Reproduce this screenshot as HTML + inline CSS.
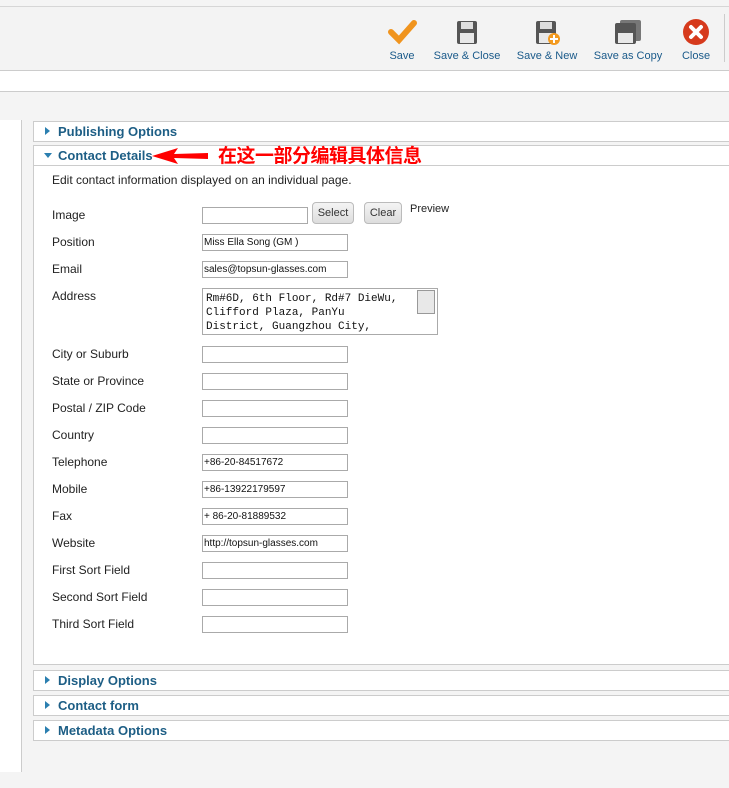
<!DOCTYPE html>
<html><head><meta charset="utf-8"><style>
body{margin:0;width:729px;height:788px;background:#f4f4f4;font-family:"Liberation Sans",Arial,sans-serif;position:relative;overflow:hidden;font-size:12px}
.abs{position:absolute}
.tb{left:0;top:6px;width:729px;height:63px;background:#f3f3f3;border-top:1px solid #d6d6d6;border-bottom:1px solid #ccc}
.btn{top:18px;text-align:center;color:#1a5a8a;font-size:11px}
.btn svg{display:block;margin:0 auto 4px}
.white2{left:0;top:71px;width:729px;height:20px;background:#fff;border-bottom:1px solid #ccc}
.leftcol{left:0;top:120px;width:21px;height:652px;background:#fff;border-right:1px solid #ccc}
.hdr{left:33px;width:700px;height:19px;background:#fff;border:1px solid #ccc;font-weight:bold;color:#1d5e85;font-size:13px}
.hdr span{position:absolute;left:24px;top:2px}
.tri{position:absolute;left:11px;top:5px;width:0;height:0;border-left:5px solid #2b7fb0;border-top:4px solid transparent;border-bottom:4px solid transparent}
.trid{position:absolute;left:10px;top:7px;border-top:5px solid #2b7fb0;border-left:4px solid transparent;border-right:4px solid transparent}
.body{left:33px;top:166px;width:700px;height:498px;background:#fff;border:1px solid #ccc;border-top:none}
.lbl{left:52px;color:#222;font-size:12px}
.in{left:202px;width:143px;height:15px;border:1px solid #aaa;background:#fff;font-size:10px;line-height:15px;padding-left:1px;color:#111}
.b2{height:20px;border:1px solid #bbb;border-radius:4px;background:linear-gradient(#f4f4f4,#ddd);font-size:11px;color:#333;text-align:center;line-height:20px}
</style></head><body>
<div class="abs tb"></div>
<div class="abs" style="left:724px;top:14px;width:1px;height:48px;background:#ccc"></div>
<div class="abs btn" style="left:386px;width:32px"><svg width="30" height="28" viewBox="0 0 30 28"><path d="M4 14 L12 22 L27 5" stroke="#f0941e" stroke-width="6" fill="none" stroke-linecap="round"/></svg>Save</div>
<div class="abs btn" style="left:432px;width:70px"><svg width="24" height="28" viewBox="0 0 24 28"><rect x="2" y="3" width="20" height="23" rx="2" fill="#555"/><rect x="6" y="4" width="12" height="7" fill="#ddd"/><rect x="5" y="15" width="14" height="10" fill="#e8e8e8"/></svg>Save &amp; Close</div>
<div class="abs btn" style="left:514px;width:66px"><svg width="26" height="28" viewBox="0 0 26 28"><rect x="2" y="3" width="20" height="23" rx="2" fill="#555"/><rect x="6" y="4" width="12" height="7" fill="#ddd"/><rect x="5" y="15" width="14" height="10" fill="#e8e8e8"/><circle cx="20" cy="21" r="6" fill="#f39a1f"/><path d="M20 17v8M16 21h8" stroke="#fff" stroke-width="2"/></svg>Save &amp; New</div>
<div class="abs btn" style="left:592px;width:72px"><svg width="30" height="28" viewBox="0 0 30 28"><rect x="7" y="2" width="21" height="21" rx="2" fill="#777"/><rect x="2" y="5" width="21" height="21" rx="2" fill="#555"/><rect x="5" y="15" width="15" height="10" fill="#e8e8e8"/></svg>Save as Copy</div>
<div class="abs btn" style="left:680px;width:32px"><svg width="30" height="28" viewBox="0 0 30 28"><circle cx="15" cy="14" r="13" fill="#d63a1c"/><path d="M10 9l10 10M20 9l-10 10" stroke="#fff" stroke-width="4" stroke-linecap="round"/></svg>Close</div>
<div class="abs white2"></div>
<div class="abs leftcol"></div>
<div class="abs hdr" style="top:121px"><div class="tri"></div><span>Publishing Options</span></div>
<div class="abs hdr" style="top:145px"><div class="trid"></div><span>Contact Details</span></div>
<svg class="abs" style="left:150px;top:146px" width="60" height="20"><path d="M2 10 L28 2 L24 8 L58 7 L58 13 L24 12 L28 18 Z" fill="#f00"/></svg>
<div class="abs" style="left:218px;top:144px;color:#f00;font-weight:bold;font-size:19px;font-family:'Noto Sans CJK SC',sans-serif;line-height:22px;letter-spacing:-0.5px">在这一部分编辑具体信息</div>
<div class="abs body"></div>
<div class="abs" style="left:52px;top:173px;color:#222">Edit contact information displayed on an individual page.</div>
<div class="abs lbl" style="top:208px">Image</div>
<div class="abs in" style="top:207px;width:103px"></div>
<div class="abs b2" style="left:312px;top:202px;width:40px">Select</div>
<div class="abs b2" style="left:364px;top:202px;width:36px">Clear</div>
<div class="abs" style="left:410px;top:203px;font-size:11px;color:#222">Preview</div>
<div class="abs lbl" style="top:235px">Position</div><div class="abs in" style="top:234px">Miss Ella Song (GM )</div>
<div class="abs lbl" style="top:262px">Email</div><div class="abs in" style="top:261px">sales@topsun-glasses.com</div>
<div class="abs lbl" style="top:289px">Address</div>
<div class="abs" style="left:202px;top:288px;width:236px;height:47px;border:1px solid #aaa;background:#fff;font-family:'Liberation Mono',monospace;font-size:11px;line-height:14px;padding:3px 0 0 3px;overflow:hidden;color:#111;box-sizing:border-box">Rm#6D, 6th Floor, Rd#7 DieWu,<br>Clifford Plaza, PanYu<br>District, Guangzhou City,</div>
<div class="abs" style="left:417px;top:290px;width:18px;height:24px;background:#e8e8e8;border:1px solid #999;box-sizing:border-box"></div>
<div class="abs lbl" style="top:347px">City or Suburb</div><div class="abs in" style="top:346px"></div>
<div class="abs lbl" style="top:374px">State or Province</div><div class="abs in" style="top:373px"></div>
<div class="abs lbl" style="top:401px">Postal / ZIP Code</div><div class="abs in" style="top:400px"></div>
<div class="abs lbl" style="top:428px">Country</div><div class="abs in" style="top:427px"></div>
<div class="abs lbl" style="top:455px">Telephone</div><div class="abs in" style="top:454px">+86-20-84517672</div>
<div class="abs lbl" style="top:482px">Mobile</div><div class="abs in" style="top:481px">+86-13922179597</div>
<div class="abs lbl" style="top:509px">Fax</div><div class="abs in" style="top:508px">+ 86-20-81889532</div>
<div class="abs lbl" style="top:536px">Website</div><div class="abs in" style="top:535px">http://topsun-glasses.com</div>
<div class="abs lbl" style="top:563px">First Sort Field</div><div class="abs in" style="top:562px"></div>
<div class="abs lbl" style="top:590px">Second Sort Field</div><div class="abs in" style="top:589px"></div>
<div class="abs lbl" style="top:617px">Third Sort Field</div><div class="abs in" style="top:616px"></div>
<div class="abs hdr" style="top:670px"><div class="tri"></div><span>Display Options</span></div>
<div class="abs hdr" style="top:695px"><div class="tri"></div><span>Contact form</span></div>
<div class="abs hdr" style="top:720px"><div class="tri"></div><span>Metadata Options</span></div>
</body></html>
